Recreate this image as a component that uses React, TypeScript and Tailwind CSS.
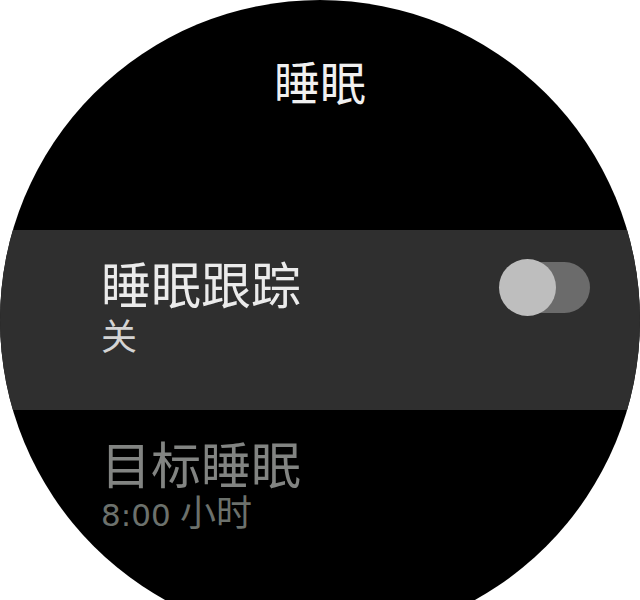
export default function App() {
  return (
    <div className="w-[640px] h-[600px] bg-white overflow-hidden font-['Noto_Sans','Noto_Sans_CJK_SC',sans-serif]">
      <div className="w-[640px] h-[640px] rounded-full bg-black overflow-hidden flex flex-col">
        <div className="h-[230px] pt-[54px] text-center text-[46px] leading-[56px] text-[#f0f0f0]">
          睡眠
        </div>

        <div className="h-[180px] bg-[#2f2f2f] flex items-start pl-[101px] pr-[50px]">
          <div className="pt-[25px] flex flex-col">
            <span className="text-[50px] leading-[60px] text-[#ebebeb]">睡眠跟踪</span>
            <span className="text-[36px] leading-[43px] text-[#d4d4d4]">关</span>
          </div>
          <div className="ml-auto mt-[29px] relative w-[91px] h-[57px]">
            <div className="absolute right-0 top-[3px] w-[80px] h-[51px] rounded-full bg-[#6b6b6b]" />
            <div className="absolute left-0 top-0 w-[57px] h-[57px] rounded-full bg-[#bebebe]" />
          </div>
        </div>

        <div className="pl-[101px] flex flex-col">
          <span className="mt-[25px] text-[50px] leading-[60px] text-[#828482]">目标睡眠</span>
          <div className="text-[36px] leading-[36px] text-[#6c716c]">
            <span className="font-['DejaVu_Sans',sans-serif] text-[31px]">8:00</span> 小时
          </div>
        </div>
      </div>
    </div>
  );
}
